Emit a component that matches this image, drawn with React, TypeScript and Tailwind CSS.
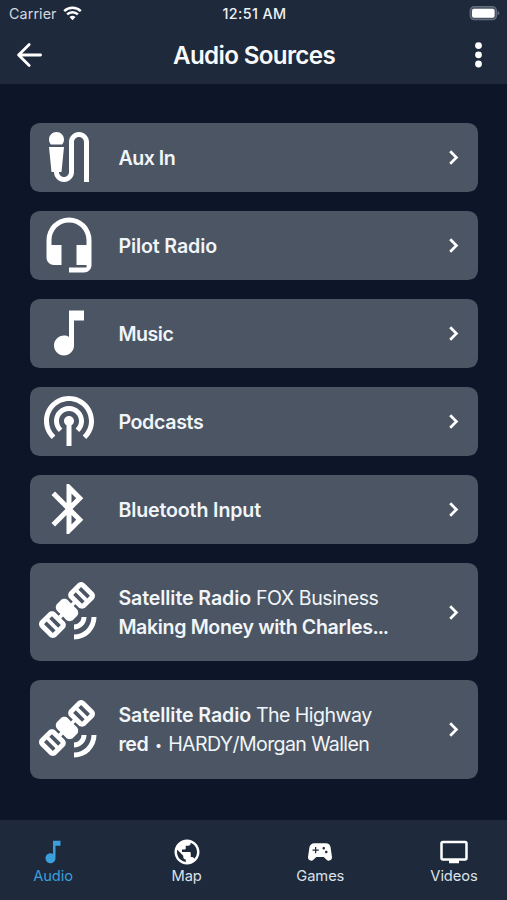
import type { ReactNode } from 'react';
import type { IconType } from 'react-icons';
import {
  MdBluetooth,
  MdHeadsetMic,
  MdMicExternalOn,
  MdMusicNote,
  MdPodcasts,
  MdPublic,
  MdSatelliteAlt,
  MdSportsEsports,
  MdTv,
} from 'react-icons/md';

function StatusBar() {
  return (
    <div className="flex h-[27px] items-center justify-between pr-[7px] pl-[9px] text-[14.3px]">
      <div className="flex flex-1 items-center gap-[6px] text-[#d3d9e1]">
        <span className="tracking-[0.1px]">Carrier</span>
        <svg width="19" height="15" viewBox="0 0 19 15" fill="none" stroke="#fff" strokeWidth="2.5">
          <path d="M1.2 5.1a12 12 0 0 1 16.6 0" />
          <path d="M4.1 8.4a7.8 7.8 0 0 1 10.8 0" />
          <path d="M9.5 14.2 6.5 11.1a4.3 4.3 0 0 1 6 0z" fill="#fff" stroke="none" />
        </svg>
      </div>
      <span className="font-medium tracking-[0.4px] text-[#eef1f5]">12:51 AM</span>
      <div className="flex flex-1 justify-end">
        <svg width="31" height="15" viewBox="0 0 31 15">
          <rect x="1.2" y="0.7" width="26.3" height="13" rx="4" fill="#4a5363" stroke="#646d7b" strokeWidth="1.2" />
          <rect x="3" y="2.7" width="22.6" height="9" rx="2" fill="#fff" />
          <path d="M28.6 4.8c2.4 1 2.4 3.8 0 4.8z" fill="#646d7b" />
        </svg>
      </div>
    </div>
  );
}

function Header() {
  return (
    <header className="h-[84px] shrink-0 bg-[#1e293b]">
      <StatusBar />
      <div className="flex h-[56px] items-center justify-between pr-[24px] pl-[16px]">
        <svg width="27" height="26" viewBox="0 0 27 26" fill="none" stroke="#fff" strokeWidth="2.8" strokeLinecap="round" strokeLinejoin="round">
          <path d="M24.6 13H2.6M13.2 2.4 2.6 13l10.6 10.6" />
        </svg>
        <h1 className="-ml-[9px] pt-[2px] text-[24.2px] font-semibold tracking-[-0.66px] text-[#f8fafc]">Audio Sources</h1>
        <svg width="9" height="28" viewBox="0 0 9 28" fill="#fff">
          <circle cx="4.5" cy="4.6" r="3.4" />
          <circle cx="4.5" cy="13.8" r="3.4" />
          <circle cx="4.5" cy="23" r="3.4" />
        </svg>
      </div>
    </header>
  );
}

function SourceCard({ icon: Icon, children }: { icon: IconType; children: ReactNode }) {
  return (
    <button className="flex w-full items-center rounded-[9.8px] bg-[#4b5563] pt-[20.6px] pr-[13px] pb-[18.6px] pl-[9.4px] text-left">
      <Icon className="-mt-[17px] -mb-[15px] size-[60px] shrink-0 text-white" />
      <div className="ml-[19px] flex-1 text-[19.6px] leading-[29.3px] font-semibold whitespace-nowrap text-[#f1f5f9]">
        {children}
      </div>
      <svg className="-mt-[2px] mr-[5px]" width="12" height="17" viewBox="0 0 12 17" fill="none" stroke="#fff" strokeWidth="2.7">
        <path d="M2.2 2.3 8.4 8.5 2.2 14.7" />
      </svg>
    </button>
  );
}

function Tab({ icon: Icon, label, active }: { icon: IconType; label: string; active?: boolean }) {
  return (
    <div className={`flex w-[106px] flex-col items-center ${active ? 'text-[#3b9fdb]' : 'text-[#dce2ea]'}`}>
      <Icon className={`size-[30px] ${active ? '' : 'text-white'}`} />
      <span className="text-[14.7px] leading-[18px] tracking-[-0.1px]">{label}</span>
    </div>
  );
}

export default function App() {
  return (
    <div className="flex h-[900px] w-[507px] flex-col overflow-hidden bg-[#0d1628] font-['Inter','Liberation_Sans',sans-serif]">
      <Header />
      <main className="flex flex-1 flex-col gap-[19.5px] pt-[39.2px] pr-[29.5px] pl-[30px]">
        <SourceCard icon={MdMicExternalOn}><span className="tracking-[-0.5px]">Aux In</span></SourceCard>
        <SourceCard icon={MdHeadsetMic}><span className="tracking-[-0.12px]">Pilot Radio</span></SourceCard>
        <SourceCard icon={MdMusicNote}><span className="tracking-[-0.45px]">Music</span></SourceCard>
        <SourceCard icon={MdPodcasts}><span className="tracking-[-0.35px]">Podcasts</span></SourceCard>
        <SourceCard icon={MdBluetooth}><span className="tracking-[-0.14px]">Bluetooth Input</span></SourceCard>
        <SourceCard icon={MdSatelliteAlt}>
          <div className="tracking-[-0.1px]">Satellite Radio <span className="font-normal tracking-[-0.45px]">FOX Business</span></div>
          <div className="tracking-[-0.36px]">Making Money with Charles<span className="tracking-[-1.2px]">...</span></div>
        </SourceCard>
        <SourceCard icon={MdSatelliteAlt}>
          <div className="tracking-[-0.1px]">Satellite Radio <span className="font-normal tracking-[-0.55px]">The Highway</span></div>
          <div className="tracking-[-0.4px]">
            red{' '}
            <span className="font-normal tracking-[-0.63px]">
              <span className="mr-[2px] ml-[2px] align-[1px] text-[12.5px]">•</span> HARDY/Morgan Wallen
            </span>
          </div>
        </SourceCard>
      </main>
      <nav className="flex h-[80px] shrink-0 justify-between bg-[#1e293b] pt-[17px]">
        <Tab icon={MdMusicNote} label="Audio" active />
        <Tab icon={MdPublic} label="Map" />
        <Tab icon={MdSportsEsports} label="Games" />
        <Tab icon={MdTv} label="Videos" />
      </nav>
    </div>
  );
}
